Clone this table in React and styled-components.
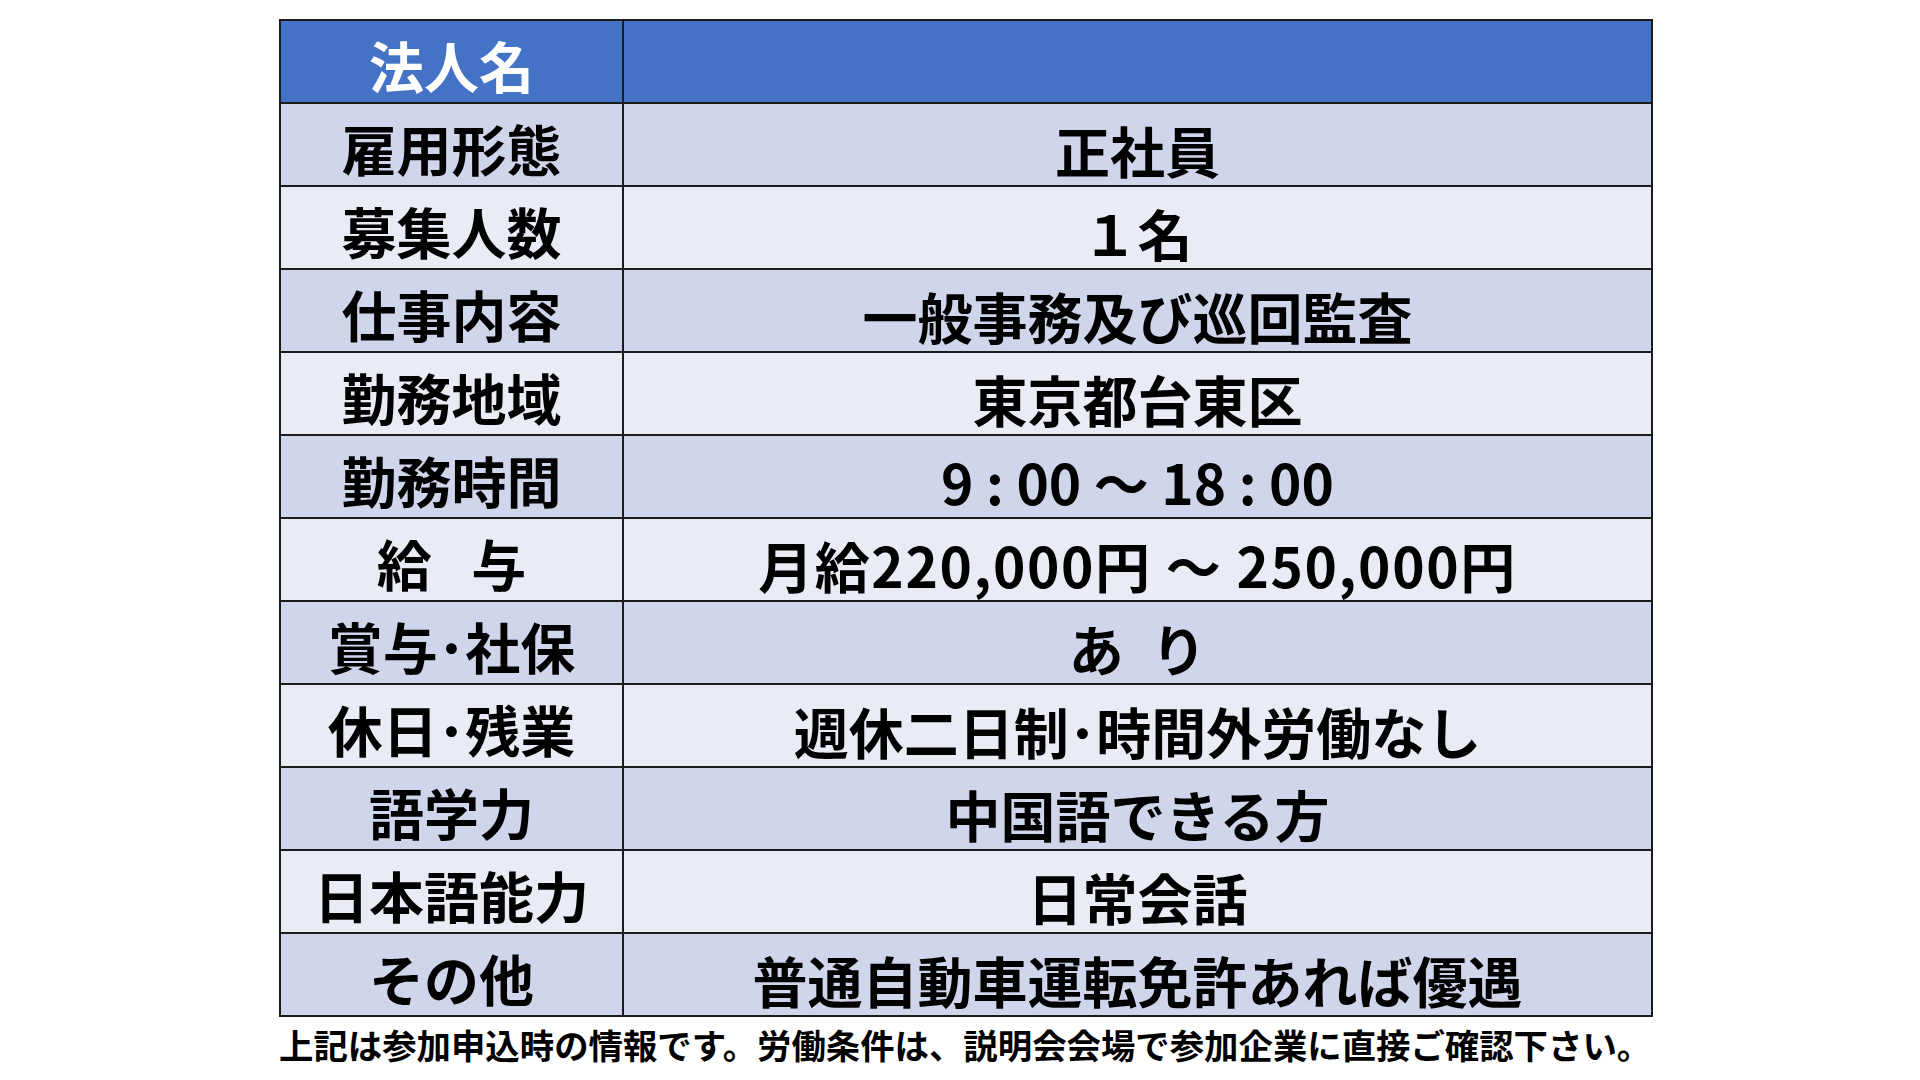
import styled, { createGlobalStyle } from "styled-components";

const GlobalStyle = createGlobalStyle`
  html, body {
    margin: 0;
    padding: 0;
    background: #ffffff;
  }
  body {
    font-family: "Noto Sans CJK JP", "Noto Sans", sans-serif;
  }
`;

const Page = styled.div`
  width: 1920px;
  height: 1080px;
  box-sizing: border-box;
  padding: 19px 0 0 279px;
  overflow: hidden;
`;

const Table = styled.table`
  width: 1374px;
  border-collapse: collapse;
  table-layout: fixed;
  border: 2px solid #1c1c1c;
`;

const Row = styled.tr`
  height: 83px;
  background: ${({ $tone }) =>
    $tone === "head" ? "#4472C4" : $tone === "dark" ? "#CFD5EA" : "#E9EBF5"};
`;

const Cell = styled.td`
  border: 2px solid #1c1c1c;
  padding: ${({ $value }) => ($value ? "9px 0 0" : "6px 0 0")};
  text-align: center;
  vertical-align: middle;
  font-size: 55px;
  font-weight: 700;
  line-height: 1;
  white-space: nowrap;
  letter-spacing: ${({ $spacing }) => $spacing || "0"};
  color: ${({ $light }) => ($light ? "#ffffff" : "#000000")};
`;

const Gap = styled.span`
  display: inline-block;
  width: ${({ $w }) => $w};
`;

const LabelCol = styled.col`
  width: 343px;
`;

const Note = styled.p`
  margin: 7px 0 0;
  font-size: 34.4px;
  font-weight: 700;
  line-height: 1.2;
  color: #000;
  white-space: nowrap;
`;

const rows = [
  { label: "雇用形態", value: "正社員" },
  { label: "募集人数", value: "１名" },
  { label: "仕事内容", value: "一般事務及び巡回監査" },
  { label: "勤務地域", value: "東京都台東区" },
  { label: "勤務時間", value: "9 : 00 ～ 18 : 00" },
  {
    label: (
      <>
        給<Gap $w="0.72em" />与
      </>
    ),
    key: "給与",
    value: "月給220,000円 ～ 250,000円",
    spacing: "1.6px",
  },
  {
    label: "賞与･社保",
    value: (
      <>
        あ<Gap $w="0.5em" />り
      </>
    ),
  },
  { label: "休日･残業", value: "週休二日制･時間外労働なし" },
  { label: "語学力", value: "中国語できる方" },
  { label: "日本語能力", value: "日常会話" },
  { label: "その他", value: "普通自動車運転免許あれば優遇" },
];

export default function App() {
  return (
    <>
      <GlobalStyle />
      <Page>
        <Table>
          <colgroup>
            <LabelCol />
            <col />
          </colgroup>
          <tbody>
            <Row $tone="head">
              <Cell $light>法人名</Cell>
              <Cell $light $value></Cell>
            </Row>
            {rows.map(({ label, key, value, spacing }, i) => (
              <Row key={key || label} $tone={i % 2 === 0 ? "dark" : "light"}>
                <Cell>{label}</Cell>
                <Cell $value $spacing={spacing}>
                  {value}
                </Cell>
              </Row>
            ))}
          </tbody>
        </Table>
        <Note>
          上記は参加申込時の情報です。労働条件は、説明会会場で参加企業に直接ご確認下さい。
        </Note>
      </Page>
    </>
  );
}
